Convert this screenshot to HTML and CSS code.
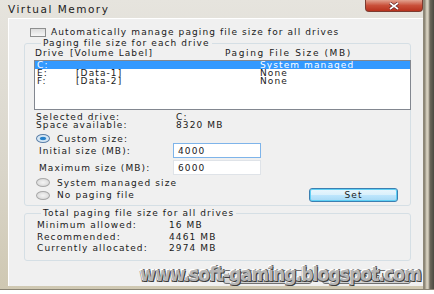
FILE: index.html
```html
<!DOCTYPE html>
<html lang="en">
  <head>
    <meta charset="UTF-8" />
    <title>Virtual Memory</title>
    <link rel="stylesheet" href="styles.css">
  </head>

  <body>
    <div class="window">
      <div class="titlebar">
        <span class="title">Virtual Memory</span>
        <span class="close">
          <svg width="14" height="8" viewBox="0 0 14 8">
            <path d="M3 1 L11 7 M11 1 L3 7" stroke="#5a2020" stroke-width="3" />
            <path d="M3 1 L11 7 M11 1 L3 7" stroke="#ffffff" stroke-width="1.6" />
          </svg>
        </span>
      </div>

      <div class="client">
        <div class="auto"><span class="check"></span>Automatically manage paging file size for all drives</div>

        <!-- Disker -->
        <fieldset class="group drives">
          <legend>Paging file size for each drive</legend>
          <div class="cols">
            <span class="col-drive">Drive</span>
            <span class="col-label">[Volume Label]</span>
            <span class="col-size">Paging File Size (MB)</span>
          </div>
          <div class="list">
            <div class="row sel"><span class="d">C:</span><span class="l"></span><span class="s">System managed</span></div>
            <div class="row"><span class="d">E:</span><span class="l">[Data-1]</span><span class="s">None</span></div>
            <div class="row"><span class="d">F:</span><span class="l">[Data-2]</span><span class="s">None</span></div>
          </div>
          <div class="info"><span class="k">Selected drive:</span><span>C:</span></div>
          <div class="info"><span class="k">Space available:</span><span>8320 MB</span></div>

          <div class="radio-row custom"><span class="radio on"></span>Custom size:</div>
          <div class="field first"><span class="k">Initial size (MB):</span><span class="box focus">4000</span></div>
          <div class="field"><span class="k">Maximum size (MB):</span><span class="box">6000</span></div>
          <div class="radio-row sys"><span class="radio"></span>System managed size</div>
          <div class="last-row">
            <div class="radio-row"><span class="radio"></span>No paging file</div>
            <span class="btn set">Set</span>
          </div>
        </fieldset>

        <!-- Totalt -->
        <fieldset class="group total">
          <legend>Total paging file size for all drives</legend>
          <div class="trow"><span class="k">Minimum allowed:</span><span>16 MB</span></div>
          <div class="trow"><span class="k">Recommended:</span><span>4461 MB</span></div>
          <div class="trow"><span class="k">Currently allocated:</span><span>2974 MB</span></div>
        </fieldset>

        <div class="buttons">
          <span class="btn">OK</span>
          <span class="btn">Cancel</span>
        </div>
      </div>

      <div class="watermark">www.soft-gaming.blogspot.com</div>
    </div>
  </body>
</html>
```

FILE: styles.css
```css
body {
  margin: 0;
  background: #ffffff;
  font-family: "DejaVu Sans", Verdana, sans-serif;
  font-size: 9px;
  letter-spacing: 1.1px;
  color: #1a1a1a;
  overflow: hidden;
}

/* Vinduet med ramme */
.window {
  position: relative;
  width: 434px;
  height: 289px;
  background:
    linear-gradient(to right, transparent 423px, #8e8878 423px, #8e8878 425px, #c9c3b2 426px, #d8d2c2 428px, #6d685b 430px, #4a4840 434px),
    linear-gradient(#e6e4de, #d9d5c9 60%, #cfc8b2);
  border-bottom: 1px solid #8a8474;
}

.titlebar {
  display: flex;
  height: 18px;
  align-items: flex-start;
}

.title {
  margin: 3px 0 0 8px;
  font-size: 10.5px;
  letter-spacing: 1.5px;
  color: #222;
}

.close {
  margin-left: auto;
  margin-right: 11px;
  width: 58px;
  height: 12px;
  display: flex;
  align-items: center;
  justify-content: center;
  background: linear-gradient(#e2a28f, #c9503a 50%, #b8321d);
  border: 1px solid #7c3b30;
  border-top: none;
  border-radius: 0 0 4px 4px;
  box-sizing: border-box;
}

.client {
  margin-left: 8px;
  width: 415px;
  height: 268px;
  box-sizing: border-box;
  padding: 8px 12px 0 15px;
  background: #f0f0f0;
  border-left: 1px solid #ffffff;
  border-top: 1px solid #ffffff;
  display: flex;
  flex-direction: column;
}

.auto {
  display: flex;
  align-items: center;
  height: 10px;
  margin-left: 6px;
  white-space: nowrap;
}

.check {
  width: 14px;
  height: 7px;
  margin-right: 5px;
  border: 1px solid #8e8f8f;
  background: linear-gradient(#dcdcdc, #f6f6f6);
}

.group {
  margin: 0;
  padding: 0 0 0 9px;
  border: 1px solid #d5dfe5;
  border-radius: 3px;
  min-width: 0;
}

.group legend {
  margin-left: 7px;
  padding: 0 2px;
  line-height: 9px;
  white-space: nowrap;
}

.drives {
  margin-top: 2px;
  padding-bottom: 3px;
}

.cols {
  display: flex;
  height: 8px;
  line-height: 8px;
  margin: 1px 0 0 1px;
  white-space: nowrap;
}

.col-drive {
  width: 35px;
}

.col-label {
  width: 155px;
}

.col-size {
  letter-spacing: 1.6px;
}

.list {
  margin-top: 3px;
  height: 50px;
  box-sizing: border-box;
  border: 1px solid #828790;
  background: #ffffff;
  margin-right: -1px;
}

.row {
  display: flex;
  height: 8px;
  line-height: 8px;
  padding-left: 2px;
  white-space: nowrap;
}

.row.sel {
  background: #3399ff;
  color: #ffffff;
}

.row .d {
  width: 39px;
}

.row .l {
  width: 184px;
}

.info {
  display: flex;
  height: 8px;
  line-height: 8px;
  margin-left: 2px;
  white-space: nowrap;
}

.list + .info {
  margin-top: 3px;
}

.info .k {
  width: 140px;
}

.radio-row {
  display: flex;
  align-items: center;
  height: 9px;
  margin-left: 2px;
  white-space: nowrap;
}

.radio {
  width: 12px;
  height: 7px;
  margin-right: 7px;
  border-radius: 50%;
  border: 1px solid #a8a8a8;
  background: radial-gradient(#f4f4f4, #d2d2d2);
}

.radio.on {
  border-color: #5a7fa8;
  background: radial-gradient(ellipse at center, #1d7bd3 0, #2f86c8 30%, #cfe3f3 42%, #eef4fa 100%);
}

.custom {
  margin-top: 5px;
}

.field {
  display: flex;
  align-items: center;
  height: 15px;
  margin-left: 5px;
  white-space: nowrap;
}

.field + .field {
  margin-top: 2px;
}

.field .k {
  width: 134px;
}

.box {
  width: 88px;
  height: 15px;
  box-sizing: border-box;
  padding: 1px 0 0 4px;
  line-height: 12px;
  background: #ffffff;
  border: 1px solid #dfe3e8;
}

.box.focus {
  border-color: #7eb4ea;
}

.sys {
  margin-top: 3px;
}

.last-row {
  display: flex;
  align-items: center;
  justify-content: space-between;
  height: 14px;
  margin-top: 1px;
  margin-right: 12px;
}

.btn {
  width: 89px;
  height: 14px;
  box-sizing: border-box;
  display: flex;
  align-items: center;
  justify-content: center;
  border: 1px solid #707070;
  border-radius: 3px;
  background: linear-gradient(#f2f2f2, #ebebeb 50%, #dddddd 51%, #cfcfcf);
}

.btn.set {
  border-color: #3c7fb1;
  box-shadow: inset 0 0 0 1px #5fd0f5;
  background: linear-gradient(#eaf6fd, #d9f0fc 50%, #bee6fd 51%, #a7d9f5);
}

.total {
  margin-top: 3px;
  padding-bottom: 5px;
}

.trow {
  display: flex;
  height: 11.5px;
  line-height: 11.5px;
  margin-left: 3px;
  white-space: nowrap;
}

.total legend + .trow {
  margin-top: 2px;
}

.trow .k {
  width: 132px;
}

.buttons {
  display: flex;
  justify-content: flex-end;
  gap: 10px;
  margin-top: 9px;
}

/* Vannmerke over vinduet */
.watermark {
  position: absolute;
  left: 140px;
  top: 263px;
  white-space: nowrap;
  font-family: "DejaVu Sans Condensed", "DejaVu Sans", sans-serif;
  font-stretch: condensed;
  font-weight: bold;
  font-size: 19px;
  line-height: 22px;
  letter-spacing: -0.9px;
  color: #b4b4b4;
  text-shadow: 1px 1px 0 #3c3c3c, -1px -1px 0 #ffffff, 1px -1px 0 #6a6a6a, -1px 1px 0 #6a6a6a;
}
```
